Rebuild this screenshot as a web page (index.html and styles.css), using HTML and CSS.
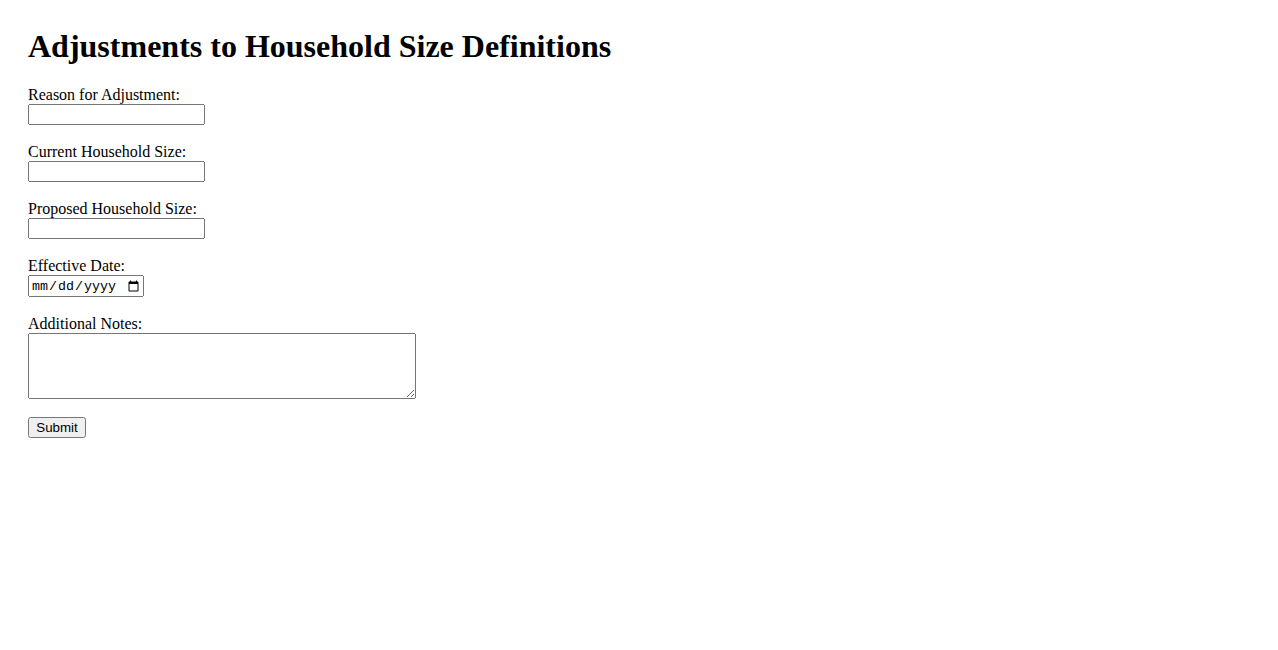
FILE: index.html
```html
<!DOCTYPE html>
<html lang="en">
<head>
<meta charset="utf-8">
<title>Adjustments to Household Size Definitions</title>
<link rel="stylesheet" href="styles.css">
</head>
<body>
<div class="page">
<h1 class="title">Adjustments to Household Size Definitions</h1>
<form class="form">
<label for="reason">Reason for Adjustment:</label><br>
<input type="text" id="reason" class="field"><br><br>
<label for="current">Current Household Size:</label><br>
<input type="number" id="current" class="field"><br><br>
<label for="proposed">Proposed Household Size:</label><br>
<input type="number" id="proposed" class="field"><br><br>
<label for="date">Effective Date:</label><br>
<input type="date" id="date" class="date"><br><br>
<label for="notes">Additional Notes:</label><br>
<textarea id="notes" class="notes" rows="4" cols="50"></textarea><br><br>
<input type="submit" value="Submit" class="submit">
</form>
</div>
</body>
</html>
```
FILE: styles.css
```css
body {
  margin: 0;
  font-family: "Liberation Serif", "Times New Roman", serif;
  font-size: 16px;
  color: #000;
  background: #fff;
}
.page {
  padding: 28px 28px;
}
.title {
  margin: 0 0 21.44px;
  font-size: 32px;
  font-weight: bold;
}
.form {
  margin: 0;
}
.field, .submit {
  font-family: "Liberation Sans", Arial, sans-serif;
  font-size: 13.333px;
}
.field {
  box-sizing: border-box;
  width: 177px;
  height: 21px;
}
.date {
  box-sizing: border-box;
  width: 116px;
  height: 22px;
}
.date, .notes {
  font-family: "Liberation Mono", monospace;
  font-size: 13.333px;
}
.notes {
  box-sizing: border-box;
  width: 388px;
  height: 66px;
  vertical-align: top;
}
.submit {
  box-sizing: border-box;
  width: 58px;
  height: 21px;
}
```
